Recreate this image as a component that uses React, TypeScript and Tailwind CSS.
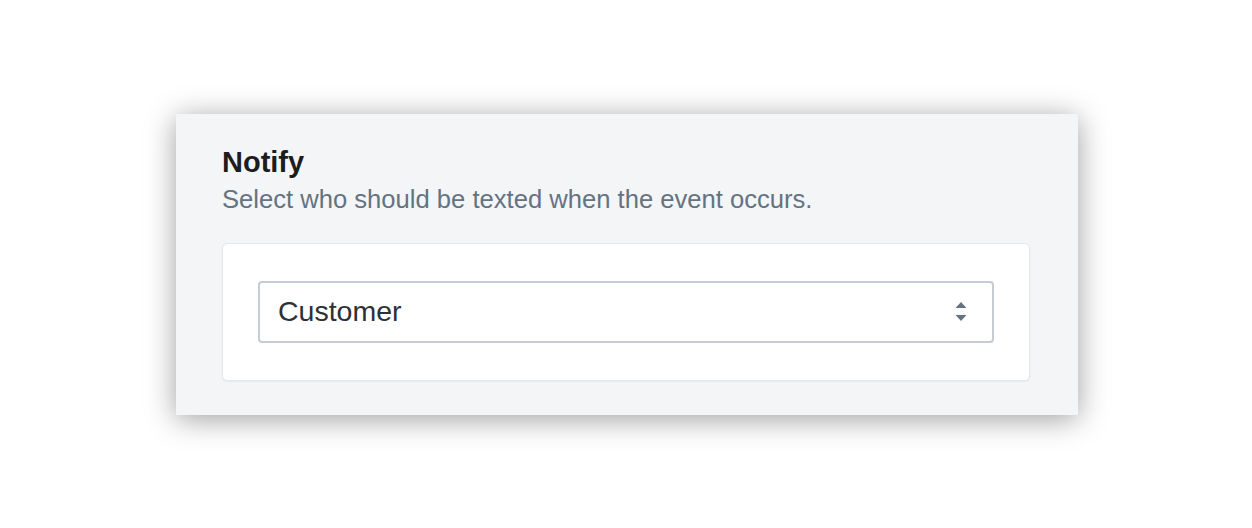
import React from "react";

const SortArrows = () => (
  <svg width="12" height="20" viewBox="0 0 12 20" className="text-[#637381]">
    <path d="M6 0 L11.5 6 L0.5 6 Z" fill="currentColor" />
    <path d="M0.5 13 L11.5 13 L6 19 Z" fill="currentColor" />
  </svg>
);

export default function App() {
  return (
    <div
      className="flex h-screen w-full items-center justify-center bg-white"
      style={{ fontFamily: '"Liberation Sans", Arial, sans-serif' }}
    >
      <div className="ml-[2px] w-[902px] bg-[#f4f5f7] pt-[31px] pb-[34px] pl-[46px] pr-[48px] shadow-[0_4px_28px_rgba(0,0,0,0.38)]">
        <h2 className="text-[29px] leading-[34px] font-bold text-[#1b1d1f]">Notify</h2>
        <p className="mt-1 text-[25.6px] leading-[32px] text-[#637381]">
          Select who should be texted when the event occurs.
        </p>
        <div className="mt-[28px] rounded-[5px] border border-[#e3e6ea] bg-white py-[37px] pl-[35px] pr-[35px] shadow-[0_1px_2px_rgba(0,0,0,0.05)]">
          <div className="flex h-[62px] items-center justify-between rounded-[4px] border-2 border-[#c4cdd5] bg-white pl-[18px] pr-[25px]">
            <span className="text-[28.5px] leading-none text-[#2b3137]">Customer</span>
            <SortArrows />
          </div>
        </div>
      </div>
    </div>
  );
}
